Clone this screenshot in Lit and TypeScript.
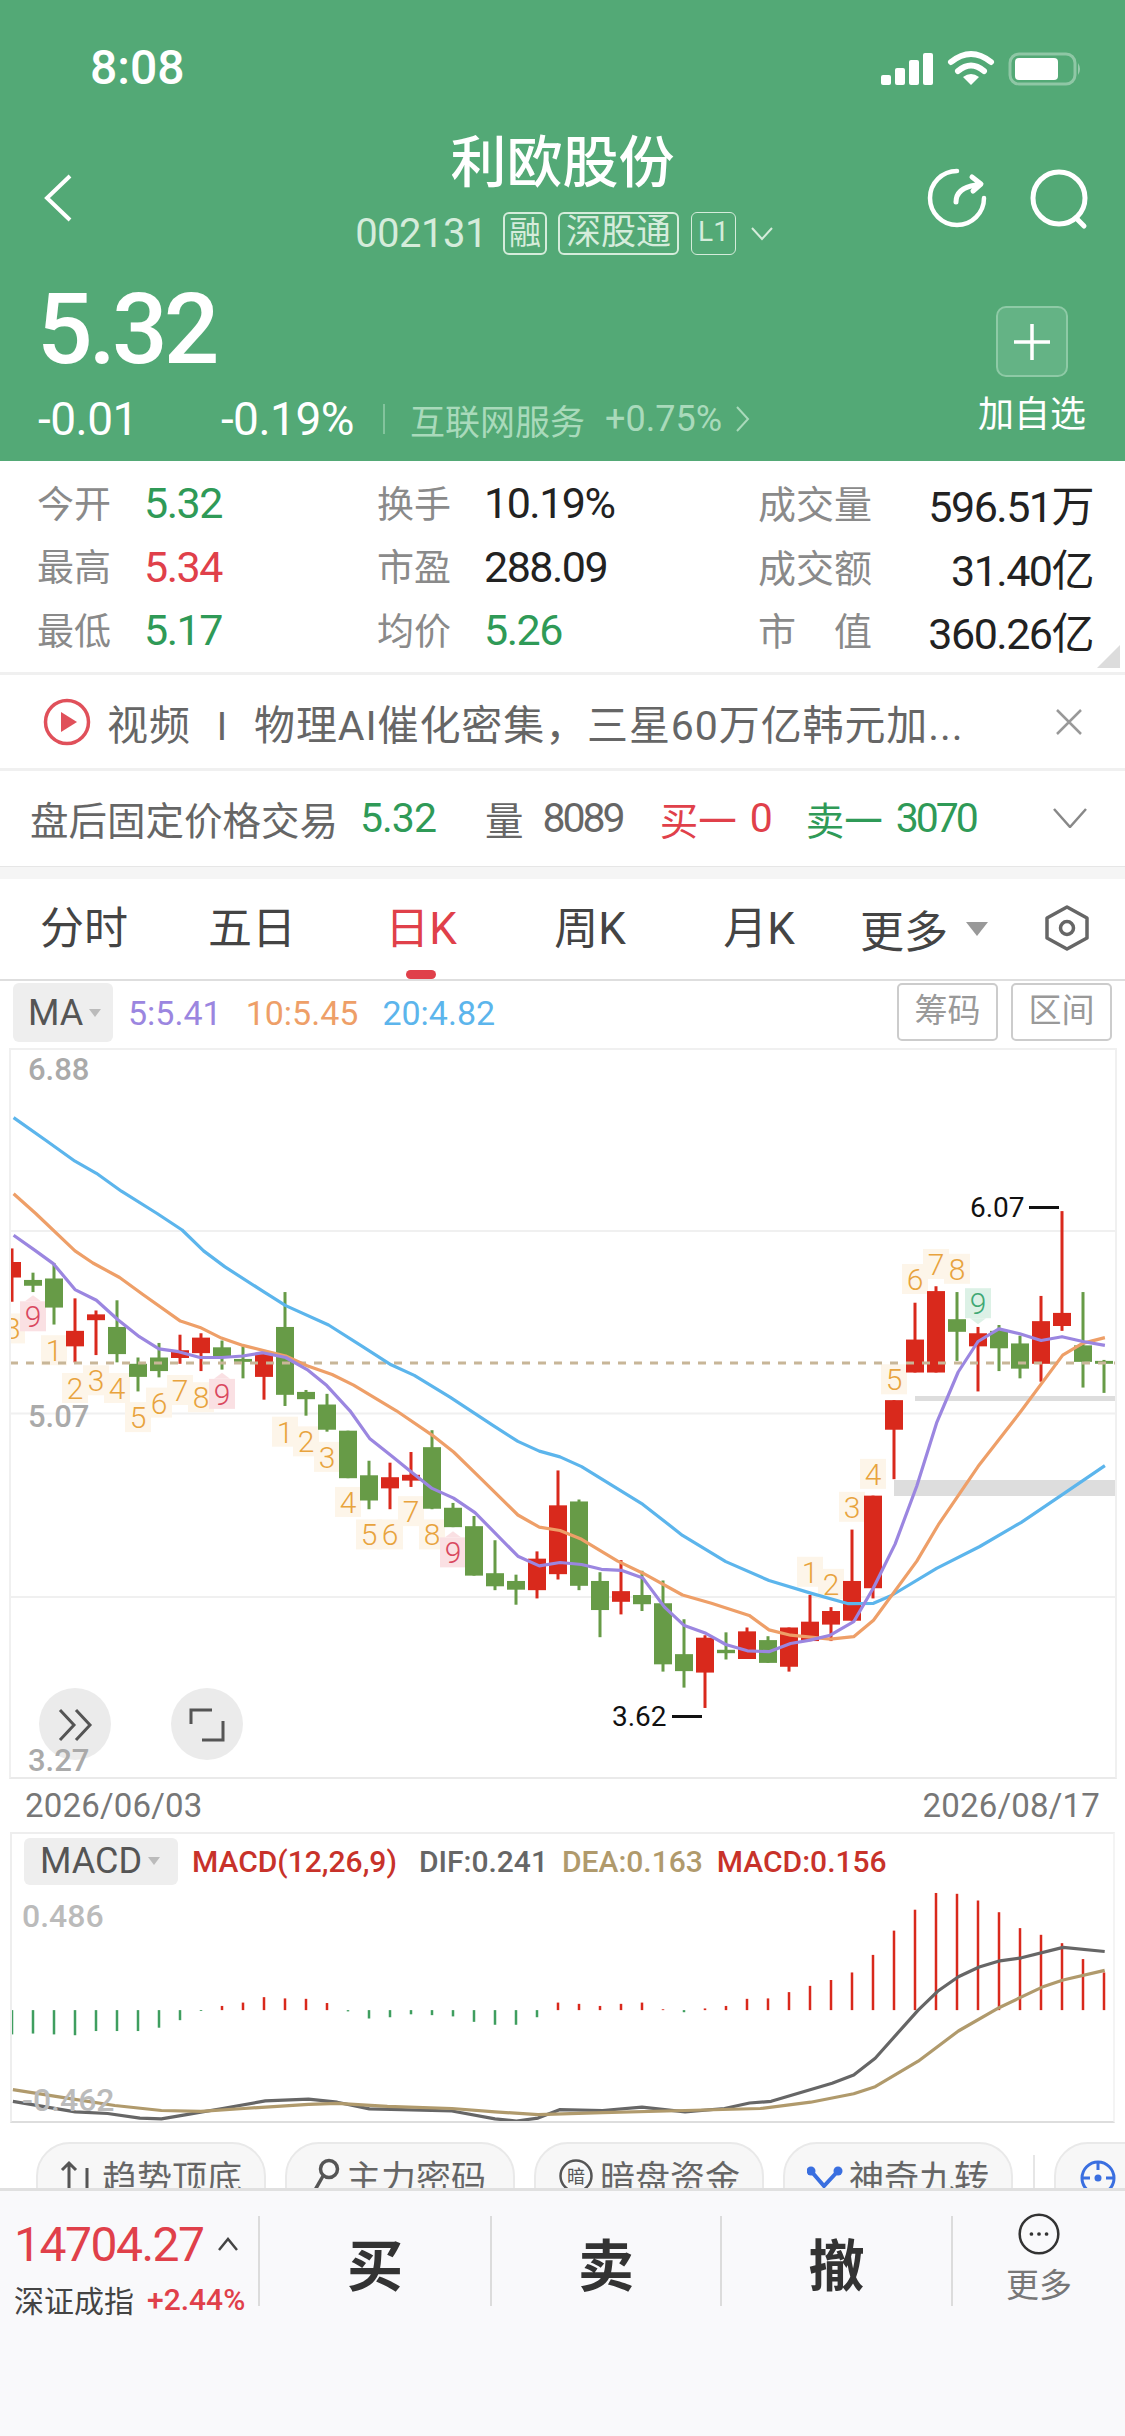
import { LitElement, html, css, svg } from 'lit';
import { customElement } from 'lit/decorators.js';

// candles: high, body top, body bottom, low, red?  (sampled y values, see ky)
const CANDLES: [number, number, number, number, number][] = [
  [430, 458, 490, 540, 1], [480, 495, 507, 520, 0], [460, 492, 552, 587, 0], [533, 600, 632, 665, 1],
  [558, 566, 578, 650, 1], [537, 592, 648, 665, 0], [655, 668, 695, 725, 0], [625, 655, 683, 696, 0],
  [608, 640, 656, 668, 1], [605, 614, 646, 683, 1], [620, 634, 652, 680, 0], [632, 658, 664, 698, 0],
  [645, 648, 695, 742, 1], [520, 592, 732, 755, 0], [722, 726, 741, 775, 0], [730, 752, 804, 808, 0],
  [806, 806, 904, 904, 0], [868, 898, 950, 968, 0], [872, 902, 925, 968, 1], [850, 897, 909, 922, 1],
  [805, 840, 967, 968, 0], [955, 965, 1005, 1005, 0], [982, 1003, 1105, 1105, 0], [1032, 1100, 1127, 1135, 0],
  [1103, 1116, 1134, 1165, 0], [1055, 1070, 1135, 1152, 1], [888, 960, 1102, 1113, 1], [948, 952, 1126, 1135, 0],
  [1098, 1116, 1176, 1232, 0], [1073, 1137, 1159, 1185, 1], [1095, 1145, 1164, 1178, 0], [1115, 1162, 1288, 1303, 0],
  [1195, 1267, 1302, 1336, 0], [1228, 1233, 1305, 1378, 1], [1222, 1258, 1265, 1278, 0], [1212, 1220, 1277, 1277, 1],
  [1230, 1238, 1285, 1285, 0], [1212, 1212, 1293, 1303, 1], [1145, 1200, 1240, 1240, 1], [1170, 1178, 1206, 1240, 1],
  [1010, 1116, 1198, 1198, 1], [940, 940, 1131, 1152, 1], [743, 743, 804, 906, 1], [542, 618, 686, 686, 1],
  [508, 518, 686, 686, 1], [520, 576, 602, 662, 0], [592, 605, 632, 725, 1], [588, 600, 636, 683, 0],
  [610, 626, 678, 698, 0], [528, 580, 668, 705, 1], [353, 563, 590, 600, 1], [520, 630, 664, 717, 0],
  [660, 662, 668, 728, 0],
];

// nine-turn tags: index into candles, digit, y, tone
const TAGS: [number, string, number, string][] = [
  [0, '8', 595, 'o'], [1, '9', 570, 'p'], [2, '1', 640, 'o'], [3, '2', 718, 'o'], [4, '3', 702, 'o'], [5, '4', 718, 'o'],
  [6, '5', 778, 'o'], [7, '6', 748, 'o'], [8, '7', 722, 'o'], [9, '8', 737, 'o'], [10, '9', 730, 'p'],
  [13, '1', 808, 'o'], [14, '2', 828, 'o'], [15, '3', 860, 'o'], [16, '4', 953, 'o'], [17, '5', 1020, 'o'],
  [18, '6', 1020, 'o'], [19, '7', 972, 'o'], [20, '8', 1020, 'o'], [21, '9', 1057, 'p'],
  [38, '1', 1097, 'o'], [39, '2', 1122, 'o'], [40, '3', 963, 'o'], [41, '4', 895, 'o'], [42, '5', 700, 'o'],
  [43, '6', 493, 'o'], [44, '7', 462, 'o'], [45, '8', 472, 'o'], [46, '9', 543, 'g'],
];

const ky = (z: number) => z / 2.063 - 8;
const kx = (i: number) => 12 + 21 * i;
const pts = (l: number[][], r: number[][]) =>
  [...l.map(([x, y]) => `${(x / 2.8).toFixed(1)},${ky(y).toFixed(1)}`),
   ...r.map(([x, y]) => `${(560 + x / 2.775).toFixed(1)},${ky(y).toFixed(1)}`)].join(' ');

const MA20 = pts(
  [[38, 160], [130, 208], [210, 250], [270, 275], [340, 312], [440, 358], [510, 392], [570, 435], [630, 468], [740, 520], [800, 548], [920, 588], [1010, 630], [1095, 670], [1160, 692], [1260, 737], [1380, 795], [1450, 828], [1510, 848]],
  [[0, 860], [60, 880], [230, 958], [340, 1022], [460, 1076], [580, 1115], [700, 1142], [800, 1163], [870, 1162], [920, 1146], [1045, 1090], [1165, 1045], [1280, 995], [1400, 935], [1512, 878]],
);
const MA10 = pts(
  [[38, 317], [100, 358], [210, 435], [260, 460], [335, 490], [400, 525], [505, 580], [560, 593], [620, 615], [680, 630], [735, 640], [800, 652], [860, 672], [930, 690], [990, 712], [1110, 765], [1210, 815], [1270, 850], [1340, 900], [1450, 980], [1510, 1005]],
  [[0, 1012], [60, 1030], [160, 1075], [230, 1100], [340, 1145], [420, 1162], [525, 1187], [580, 1217], [640, 1228], [750, 1236], [815, 1231], [870, 1197], [990, 1075], [1050, 1000], [1160, 880], [1280, 765], [1395, 650], [1450, 626], [1512, 614]],
);
const MA5 = pts(
  [[38, 403], [100, 435], [150, 462], [210, 515], [270, 537], [330, 577], [390, 612], [445, 637], [500, 643], [560, 655], [620, 655], [680, 652], [735, 645], [800, 655], [860, 680], [915, 713], [980, 765], [1035, 822], [1100, 860], [1150, 890], [1210, 925], [1270, 945], [1330, 975], [1450, 1065], [1510, 1085]],
  [[0, 1078], [60, 1082], [115, 1092], [170, 1094], [230, 1110], [290, 1170], [345, 1208], [405, 1224], [460, 1247], [520, 1260], [580, 1262], [640, 1245], [694, 1238], [750, 1228], [815, 1200], [870, 1130], [930, 1040], [990, 920], [1045, 790], [1105, 685], [1160, 622], [1218, 596], [1276, 606], [1335, 620], [1393, 612], [1451, 622], [1512, 630]],
);

// macd panel values, local y = z / 2.39 - 52
const my = (z: number) => z / 2.39 - 52;
const mpts = (l: number[][]) => l.map(([x, y]) => `${(x / 1.394).toFixed(1)},${my(y).toFixed(1)}`).join(' ');
const BARS = [608, 606, 608, 610, 600, 600, 600, 592, 574, 552, 540, 532, 519, 522, 523, 533, 553, 570, 567, 560, 562, 565, 578, 585, 585, 567, 532, 535, 540, 535, 532, 548, 555, 546, 540, 523, 522, 507, 492, 478, 460, 418, 360, 310, 270, 272, 288, 316, 354, 370, 390, 428, 460];
const DIF = mpts([[18, 768], [105, 793], [150, 797], [195, 808], [225, 810], [260, 800], [310, 785], [370, 767], [430, 763], [470, 770], [515, 786], [560, 788], [630, 791], [690, 810], [720, 815], [750, 808], [780, 788], [840, 790], [895, 782], [955, 793], [1010, 785], [1045, 772], [1075, 768], [1160, 725], [1190, 705], [1220, 665], [1280, 550], [1307, 505], [1336, 470], [1365, 447], [1394, 432], [1424, 425], [1482, 400], [1540, 410]]);
const DEA = mpts([[18, 740], [100, 762], [160, 778], [225, 790], [280, 792], [340, 785], [430, 775], [470, 773], [540, 780], [630, 785], [690, 793], [750, 800], [840, 795], [955, 790], [1060, 785], [1130, 770], [1190, 750], [1220, 733], [1280, 672], [1336, 600], [1394, 543], [1453, 495], [1482, 478], [1540, 455]]);

const STATS = [
  [['今开', '5.32', 'up'], ['换手', '10.19%', ''], ['成交量', '596.51万', '']],
  [['最高', '5.34', 'red'], ['市盈', '288.09', ''], ['成交额', '31.40亿', '']],
  [['最低', '5.17', 'up'], ['均价', '5.26', 'up'], ['市　值', '360.26亿', '']],
];

@customElement('app-root')
export class AppRoot extends LitElement {
  static styles = css`
    :host {
      display: block;
      width: 1125px;
      height: 2436px;
      overflow: hidden;
      background: #fff;
      font-family: Roboto, "Noto Sans CJK SC", sans-serif;
      color: #222;
    }
    svg { display: block; }

    /* green header */
    .head { height: 461px; background: #53a976; color: #fff; }
    .status { height: 125px; display: flex; justify-content: space-between; align-items: center; padding: 36px 41px 25px 90px; box-sizing: border-box; }
    .time { font-size: 48px; line-height: 64px; font-weight: 500; }
    .nav { height: 146px; display: grid; grid-template-columns: 1fr auto 1fr; align-items: center; padding: 0 44px; }
    .nav .right { display: flex; justify-content: flex-end; gap: 41px; margin-right: -13px; }
    .name { display: flex; flex-direction: column; align-items: center; gap: 11px; }
    .title { font-size: 56px; line-height: 60px; font-weight: 500; }
    .code { display: flex; align-items: center; height: 60px; padding-left: 3px; color: #d5ecdb; font-size: 40px; letter-spacing: -0.5px; }
    .badge { border: 2px solid #d5ecdb; border-radius: 6px; height: 43px; box-sizing: border-box; padding: 0 6px; margin-left: 11px; font-size: 35px; line-height: 38px; letter-spacing: 0; }
    .badge.first { margin-left: 16px; font-size: 32px; padding: 0 4px; }
    .badge.l1 { font-size: 28px; padding: 0 6px; margin-left: 12px; border-width: 1px; }
    .code svg { margin-left: 15px; }
    .quote { display: flex; justify-content: space-between; padding: 0 39px 0 38px; height: 190px; }
    .price { font-size: 98px; line-height: 118px; font-weight: 500; letter-spacing: -4px; margin-left: -1px; }
    .change { display: flex; align-items: center; height: 60px; font-size: 46px; letter-spacing: -0.5px; }
    .change .pct { margin-left: 83px; }
    .change .sep { width: 2px; height: 30px; background: #83c49d; margin: 0 25px 0 29px; }
    .change .plate { color: #a9dabb; font-size: 35px; display: flex; align-items: center; letter-spacing: 0; }
    .change .plate b { font-weight: 400; font-size: 36px; margin-left: 20px; }
    .change .plate svg { margin-left: 14px; }
    .add { display: flex; flex-direction: column; align-items: center; }
    .add .plus { margin-top: 35px; width: 72px; height: 71px; box-sizing: border-box; border: 2px solid #8ecaa6; border-radius: 10px; background: #64b385; display: flex; align-items: center; justify-content: center; }
    .add span { font-size: 36px; line-height: 44px; margin-top: 16px; }

    /* stat table */
    .stats { height: 214px; box-sizing: border-box; padding: 9px 32px 0 37px; display: grid; grid-template-columns: 340px 381px 1fr; grid-auto-rows: 63.5px; position: relative; border-bottom: 3px solid #f0f0f0; }
    .stat { display: flex; align-items: center; font-size: 43px; letter-spacing: -1.5px; }
    .stat .k { font-size: 37px; color: #8a8a8a; width: 107px; flex: none; letter-spacing: 0; }
    .stat .v { padding-top: 3px; }
    .stat.wide { justify-content: space-between; }
    .stat.wide .k { width: auto; font-size: 38px; }
    .up { color: #2f9a57; }
    .red { color: #e0404a; }
    .corner { position: absolute; right: 5px; bottom: 4px; width: 0; height: 0; border-left: 23px solid transparent; border-bottom: 23px solid #dcdcdc; }

    /* notice rows */
    .video { height: 96px; box-sizing: border-box; border-bottom: 3px solid #f0f0f0; display: flex; align-items: center; padding: 0 42px 0 43px; font-size: 41px; letter-spacing: 0.9px; color: #666; }
    .video .txt { margin-left: 16px; flex: 1; white-space: nowrap; }
    .video .bar { margin: 0 26px; font-size: 38px; }
    .after { height: 95px; box-sizing: border-box; display: flex; align-items: center; padding: 0 38px 2px 30px; font-size: 38.5px; color: #666; position: relative; }
    .after .num { font-size: 41px; letter-spacing: -1px; }
    .after .num.tight { letter-spacing: -3px; }
    .after .gap { margin-left: 22px; }
    .after .vol { margin-left: 49px; }
    .after .n8089 { margin-left: 19px; }
    .after .b1 { margin-left: 37px; }
    .after .s1 { margin-left: 34px; }
    .after .tail { margin-left: 13px; }
    .after svg { margin-left: auto; }
    .band { height: 13px; box-sizing: border-box; background: #f5f5f5; border-top: 1px solid #e6e6e6; }

    /* period tabs */
    .tabs { height: 102px; box-sizing: border-box; border-bottom: 2px solid #dedede; display: grid; grid-template-columns: 168px 168px 170px 168px 170px 1fr; align-items: center; font-size: 44px; color: #444; }
    .tab { text-align: center; position: relative; line-height: 100px; }
    .tab.on { color: #e0404a; }
    .tab.on::after { content: ''; position: absolute; left: 50%; margin-left: -15px; bottom: 0; width: 30px; height: 9px; border-radius: 5px; background: #e0404a; }
    .more { display: flex; align-items: center; padding: 0 36px 0 16px; }
    .more svg:first-of-type { margin-left: 18px; }
    .more svg:last-of-type { margin-left: auto; margin-top: -3px; }

    /* MA legend */
    .ma { height: 67px; box-sizing: border-box; padding: 2px 13px 0 13px; display: flex; align-items: flex-start; }
    .pill { background: #eee; border-radius: 6px; display: flex; align-items: center; color: #555; }
    .ma .pill { width: 100px; height: 59px; padding-left: 15px; box-sizing: border-box; font-size: 36px; }
    .pill i { width: 0; height: 0; border: 6px solid transparent; border-top: 8px solid #bbb; border-bottom: 0; margin-left: 6px; }
    .legend { display: flex; gap: 24px; height: 59px; align-items: center; margin-left: 15px; font-size: 34px; }
    .btns { margin-left: auto; display: flex; gap: 13px; }
    .btn { width: 101px; height: 58px; box-sizing: border-box; border: 2px solid #ccc; border-radius: 5px; font-size: 33px; color: #999; text-align: center; line-height: 52px; }

    /* chart */
    .kline { margin: 0 8px 0 9px; height: 731px; box-sizing: border-box; border: 2px solid #f0f0f0; border-bottom-color: #eaeaea; }
    .dates { height: 53px; box-sizing: border-box; padding: 0 25px; display: flex; justify-content: space-between; align-items: center; font-size: 33px; color: #777; letter-spacing: 0.2px; }
    .macd { margin: 0 10px; height: 291px; box-sizing: border-box; border: 2px solid #eee; border-bottom-color: #ddd; border-right-color: #f4f4f4; position: relative; }
    .macd svg { position: absolute; left: 0; top: 0; }
    .macd .row { position: relative; display: flex; align-items: center; height: 48px; margin: 3px 0 0 12px; font-size: 30px; font-weight: 500; gap: 14px; }
    .macd .pill { width: 154px; height: 47px; padding-left: 16px; box-sizing: border-box; font-size: 36px; font-weight: 400; }
    .macd .val { position: absolute; left: 10px; font-size: 32px; color: #bbb; font-weight: 500; }

    /* indicator chips, cut off by the bottom bar */
    .chips { height: 65px; overflow: hidden; box-sizing: border-box; padding: 19px 0 0 36px; display: flex; gap: 19px; align-items: flex-start; }
    .chip { flex: none; width: 230px; height: 90px; box-sizing: border-box; border: 2px solid #e9e9e9; border-radius: 34px; background: #f7f7f7; display: flex; justify-content: center; gap: 6px; padding-top: 12px; font-size: 35px; line-height: 48px; color: #666; }
    .chip.cut { justify-content: flex-start; padding-left: 23px; }
    .chips .split { flex: none; width: 2px; height: 40px; margin: 13px 0 0 1px; background: #e6e6e6; }

    /* bottom bar */
    .bottom { height: 248px; box-sizing: border-box; background: #f9f9fb; border-top: 3px solid #e0e0e0; display: grid; grid-template-columns: 258px 232px 230px 231px 1fr; align-items: start; padding-top: 25px; }
    .index { padding-left: 14px; }
    .index .pt { display: flex; align-items: center; height: 56px; font-size: 48px; letter-spacing: -1.5px; color: #e0404a; }
    .index .pt svg { margin-left: 13px; }
    .index .nm { display: flex; align-items: center; height: 54px; font-size: 30px; color: #444; }
    .index .nm b { margin-left: 13px; font-weight: 500; color: #e0404a; }
    .act { height: 90px; border-left: 2px solid #dcdcdc; display: flex; align-items: center; justify-content: center; font-size: 56px; font-weight: 700; color: #333; }
    .act.last { flex-direction: column; justify-content: flex-start; font-size: 33px; font-weight: 400; color: #777; }
    .act.last svg { margin-top: -3px; }
    .act.last span { margin-top: 11px; line-height: 40px; }
  `;

  private candles() {
    return CANDLES.map(([h, t, b, l, up], i) => {
      const c = up ? '#d9291c' : '#679b47';
      const x = kx(i);
      return svg`<rect x=${x - 1.5} y=${ky(h)} width="3" height=${ky(l) - ky(h)} fill=${c}></rect>
        <rect x=${x - 9} y=${ky(t)} width="18" height=${Math.max(ky(b) - ky(t), 2)} fill=${c}></rect>`;
    });
  }

  private tags() {
    const tone: Record<string, string[]> = {
      o: ['#fdf5e9', '#e8a33d'],
      p: ['#fae0e3', '#d9485f'],
      g: ['#dcf1e6', '#3fa874'],
    };
    return TAGS.map(([i, d, z, t]) => {
      const [bg, fg] = tone[t];
      const x = kx(i);
      const y = ky(z);
      // pink sell tags point up, the green buy tag points down
      const peak = t === 'p' ? `M${x - 8} ${y - 15}L${x} ${y - 21}L${x + 8} ${y - 15}Z`
        : t === 'g' ? `M${x - 8} ${y + 15}L${x} ${y + 21}L${x + 8} ${y + 15}Z` : '';
      return svg`<rect x=${x - 13} y=${y - 15} width="26" height="30" fill=${bg}></rect>
        <path d=${peak} fill=${bg}></path>
        <text x=${x} y=${y + 11} text-anchor="middle" font-size="30" font-weight="300" fill=${fg}>${d}</text>`;
    });
  }

  private chart() {
    return svg`<svg width="1104" height="727" viewBox="11 2 1104 727" font-family="Roboto, sans-serif">
      ${[182, 364.5, 548].map((y) => svg`<rect x="10" y=${y} width="1105" height="2" fill="#f0f0f0"></rect>`)}
      <rect x="915" y="348" width="200" height="5" fill="#dddddd"></rect>
      <rect x="894" y="432" width="221" height="16" fill="#dddddd"></rect>
      ${this.tags()}
      ${this.candles()}
      <line x1="10" y1="315" x2="1115" y2="315" stroke="#c8b698" stroke-width="3" stroke-dasharray="8 8"></line>
      <polyline points=${MA20} fill="none" stroke="#5cb5ec" stroke-width="3.2" stroke-linejoin="round"></polyline>
      <polyline points=${MA10} fill="none" stroke="#ee9f68" stroke-width="3.2" stroke-linejoin="round"></polyline>
      <polyline points=${MA5} fill="none" stroke="#9b86e0" stroke-width="3.2" stroke-linejoin="round"></polyline>
      <text x="28" y="32" font-size="31" font-weight="500" fill="#aaa">6.88</text>
      <text x="28" y="379" font-size="31" font-weight="500" fill="#aaa">5.07</text>
      <ellipse cx="75" cy="676" rx="36" ry="36" fill="#ebebeb"></ellipse>
      <ellipse cx="207" cy="676" rx="36" ry="36" fill="#ebebeb"></ellipse>
      <path d="M60 662l14 15-14 15M76 662l14 15-14 15" fill="none" stroke="#555" stroke-width="3"></path>
      <path d="M191 676v-14h21M223 673v19h-21" fill="none" stroke="#555" stroke-width="3"></path>
      <text x="28" y="723" font-size="31" font-weight="500" fill="#aaa">3.27</text>
      <text x="612" y="678" font-size="28" fill="#111">3.62</text>
      <rect x="672" y="667" width="30" height="3" fill="#111"></rect>
      <text x="970" y="169" font-size="28" fill="#111">6.07</text>
      <rect x="1029" y="158" width="30" height="3" fill="#111"></rect>
    </svg>`;
  }

  private macdLines() {
    const zero = my(550);
    return svg`<svg width="1101" height="287" viewBox="12 2 1101 287">
      ${BARS.map((z, i) => {
        const y = my(z);
        const up = y < zero;
        return svg`<rect x=${kx(i) - 1.25} y=${up ? y : zero} width="2.5" height=${Math.abs(y - zero)} fill=${up ? '#d9291c' : '#3f9e5f'}></rect>`;
      })}
      <polyline points=${DIF} fill="none" stroke="#666" stroke-width="3.2" stroke-linejoin="round"></polyline>
      <polyline points=${DEA} fill="none" stroke="#b09a6c" stroke-width="3.2" stroke-linejoin="round"></polyline>
    </svg>`;
  }

  render() {
    return html`
      <div class="head">
        <div class="status">
          <span class="time">8:08</span>
          <svg width="204" height="36" viewBox="880 50 204 36" fill="#fff">
            <rect x="881" y="75" width="10" height="10" rx="2"></rect>
            <rect x="895" y="68" width="10" height="17" rx="2"></rect>
            <rect x="909" y="60" width="10" height="25" rx="2"></rect>
            <rect x="923" y="53" width="10" height="32" rx="2"></rect>
            <path d="M951 62Q971 46 991 62M958 71Q971 60 984 71" fill="none" stroke="#fff" stroke-width="6" stroke-linecap="round"></path>
            <path d="M963 77Q971 71 979 77L971 85Z"></path>
            <rect x="1010" y="54" width="65" height="30" rx="9" fill="none" stroke="#fff" stroke-opacity=".35" stroke-width="3"></rect>
            <rect x="1015" y="58" width="43" height="22" rx="4"></rect>
            <path d="M1078 63q4 6 0 12z" fill-opacity=".4"></path>
          </svg>
        </div>
        <div class="nav">
          <svg width="28" height="48" viewBox="0 0 28 48"><path d="M26 2L3 24l23 22" fill="none" stroke="#fff" stroke-width="4"></path></svg>
          <div class="name">
            <div class="title">利欧股份</div>
            <div class="code">
              <span>002131</span>
              <span class="badge first">融</span>
              <span class="badge">深股通</span>
              <span class="badge l1">L1</span>
              <svg width="22" height="14" viewBox="0 0 22 14"><path d="M1 1l10 11L21 1" fill="none" stroke="#d5ecdb" stroke-width="2"></path></svg>
            </div>
          </div>
          <div class="right">
            <svg width="64" height="64" viewBox="925 166 64 64" fill="none" stroke="#fff" stroke-width="5" stroke-linecap="round" stroke-linejoin="round">
              <path d="M957 171A27 27 0 1 0 984 198" stroke-width="4.5"></path>
              <path d="M956 202q0-14 20-17M972 177l9 7-8 7"></path>
            </svg>
            <svg width="64" height="64" viewBox="1030 166 64 64" fill="none" stroke="#fff" stroke-width="5" stroke-linecap="round">
              <circle cx="1059" cy="198" r="26"></circle>
              <path d="M1076 218l8 8"></path>
            </svg>
          </div>
        </div>
        <div class="quote">
          <div>
            <div class="price">5.32</div>
            <div class="change">
              <span>-0.01</span>
              <span class="pct">-0.19%</span>
              <i class="sep"></i>
              <span class="plate">互联网服务<b>+0.75%</b>
                <svg width="14" height="26" viewBox="0 0 14 26"><path d="M1 1l11 12L1 25" fill="none" stroke="#a9dabb" stroke-width="2"></path></svg>
              </span>
            </div>
          </div>
          <div class="add">
            <div class="plus">
              <svg width="38" height="38" viewBox="0 0 38 38"><path d="M19 1v36M1 19h36" stroke="#fff" stroke-width="3.5"></path></svg>
            </div>
            <span>加自选</span>
          </div>
        </div>
      </div>

      <div class="stats">
        ${STATS.map((row) => row.map(([k, v, c], i) => html`
          <div class="stat ${i === 2 ? 'wide' : ''}"><span class="k">${k}</span><span class="v ${c}">${v}</span></div>
        `))}
        <i class="corner"></i>
      </div>

      <div class="video">
        <svg width="48" height="48" viewBox="0 0 48 48">
          <circle cx="24" cy="24" r="21.5" fill="none" stroke="#e0505a" stroke-width="3.5"></circle>
          <path d="M18 14l16 10-16 10z" fill="#e0505a"></path>
        </svg>
        <div class="txt">视频<span class="bar">I</span>物理AI催化密集，三星60万亿韩元加...</div>
        <svg width="28" height="28" viewBox="0 0 28 28"><path d="M2 2l24 24M26 2L2 26" stroke="#999" stroke-width="2.5"></path></svg>
      </div>

      <div class="after">
        <span>盘后固定价格交易</span>
        <span class="num up gap">5.32</span>
        <span class="vol">量</span>
        <span class="num tight n8089">8089</span>
        <span class="red b1">买一</span>
        <span class="num red tail">0</span>
        <span class="up s1">卖一</span>
        <span class="num tight up tail">3070</span>
        <svg width="34" height="20" viewBox="0 0 34 20"><path d="M1 1l16 18L33 1" fill="none" stroke="#888" stroke-width="2.5"></path></svg>
      </div>
      <div class="band"></div>

      <div class="tabs">
        <div class="tab">分时</div>
        <div class="tab">五日</div>
        <div class="tab on">日K</div>
        <div class="tab">周K</div>
        <div class="tab">月K</div>
        <div class="more">
          <span>更多</span>
          <svg width="22" height="14" viewBox="0 0 22 14"><path d="M0 0h22L11 14z" fill="#999"></path></svg>
          <svg width="44" height="46" viewBox="0 0 44 46" fill="none" stroke="#666" stroke-width="3.5">
            <path d="M22 2l20 11v20L22 44 2 33V13z" stroke-linejoin="round"></path>
            <circle cx="22" cy="23" r="6.5"></circle>
          </svg>
        </div>
      </div>

      <div class="ma">
        <div class="pill">MA<i></i></div>
        <div class="legend">
          <span style="color:#9b86e0">5:5.41</span>
          <span style="color:#ee9f68">10:5.45</span>
          <span style="color:#5cb5ec">20:4.82</span>
        </div>
        <div class="btns"><div class="btn">筹码</div><div class="btn">区间</div></div>
      </div>

      <div class="kline">${this.chart()}</div>
      <div class="dates"><span>2026/06/03</span><span>2026/08/17</span></div>

      <div class="macd">
        ${this.macdLines()}
        <div class="row">
          <div class="pill">MACD<i></i></div>
          <span style="color:#c8322a;margin-right:8px">MACD(12,26,9)</span>
          <span style="color:#666">DIF:0.241</span>
          <span style="color:#b09a6c">DEA:0.163</span>
          <span style="color:#c8322a">MACD:0.156</span>
        </div>
        <span class="val" style="top:63px">0.486</span>
        <span class="val" style="top:247px">-0.462</span>
      </div>

      <div class="chips">
        <div class="chip">
          <svg width="36" height="44" viewBox="0 0 36 44" fill="none" stroke="#555" stroke-width="3"><path d="M9 34V8M2 14l7-7 7 7M27 12v28"></path></svg>
          趋势顶底
        </div>
        <div class="chip">
          <svg width="26" height="44" viewBox="0 0 26 44" fill="none" stroke="#555" stroke-width="3.5"><circle cx="15" cy="13" r="8.5"></circle><path d="M9 20L1 34"></path></svg>
          主力密码
        </div>
        <div class="chip">
          <svg width="36" height="44" viewBox="0 0 36 44" font-family="Noto Sans CJK SC"><circle cx="18" cy="20" r="15.5" fill="none" stroke="#555" stroke-width="2.5"></circle><text x="18" y="27" font-size="18" text-anchor="middle" fill="#555">暗</text></svg>
          暗盘资金
        </div>
        <div class="chip">
          <svg width="36" height="44" viewBox="0 0 36 44" fill="#3a6fe0"><circle cx="4" cy="15" r="4.5"></circle><circle cx="31" cy="15" r="4.5"></circle><path d="M4 15l13 15L31 15" fill="none" stroke="#3a6fe0" stroke-width="4"></path></svg>
          神奇九转
        </div>
        <i class="split"></i>
        <div class="chip cut">
          <svg width="38" height="44" viewBox="0 0 38 44" fill="none" stroke="#3a6fe0" stroke-width="3"><circle cx="19" cy="22" r="16"></circle><path d="M19 6v8M3 22h8M27 22h8"></path><circle cx="19" cy="22" r="3.5" fill="#3a6fe0" stroke="none"></circle></svg>
        </div>
      </div>

      <div class="bottom">
        <div class="index">
          <div class="pt">14704.27
            <svg width="22" height="14" viewBox="0 0 22 14"><path d="M2 13l9-11 9 11" fill="none" stroke="#444" stroke-width="2.5"></path></svg>
          </div>
          <div class="nm">深证成指<b>+2.44%</b></div>
        </div>
        <div class="act">买</div>
        <div class="act">卖</div>
        <div class="act">撤</div>
        <div class="act last">
          <svg width="50" height="50" viewBox="0 0 50 50"><circle cx="25" cy="25" r="23" fill="none" stroke="#333" stroke-width="3"></circle><circle cx="16" cy="25" r="2.2" fill="#333"></circle><circle cx="25" cy="25" r="2.2" fill="#333"></circle><circle cx="34" cy="25" r="2.2" fill="#333"></circle></svg>
          <span>更多</span>
        </div>
      </div>
    `;
  }
}
